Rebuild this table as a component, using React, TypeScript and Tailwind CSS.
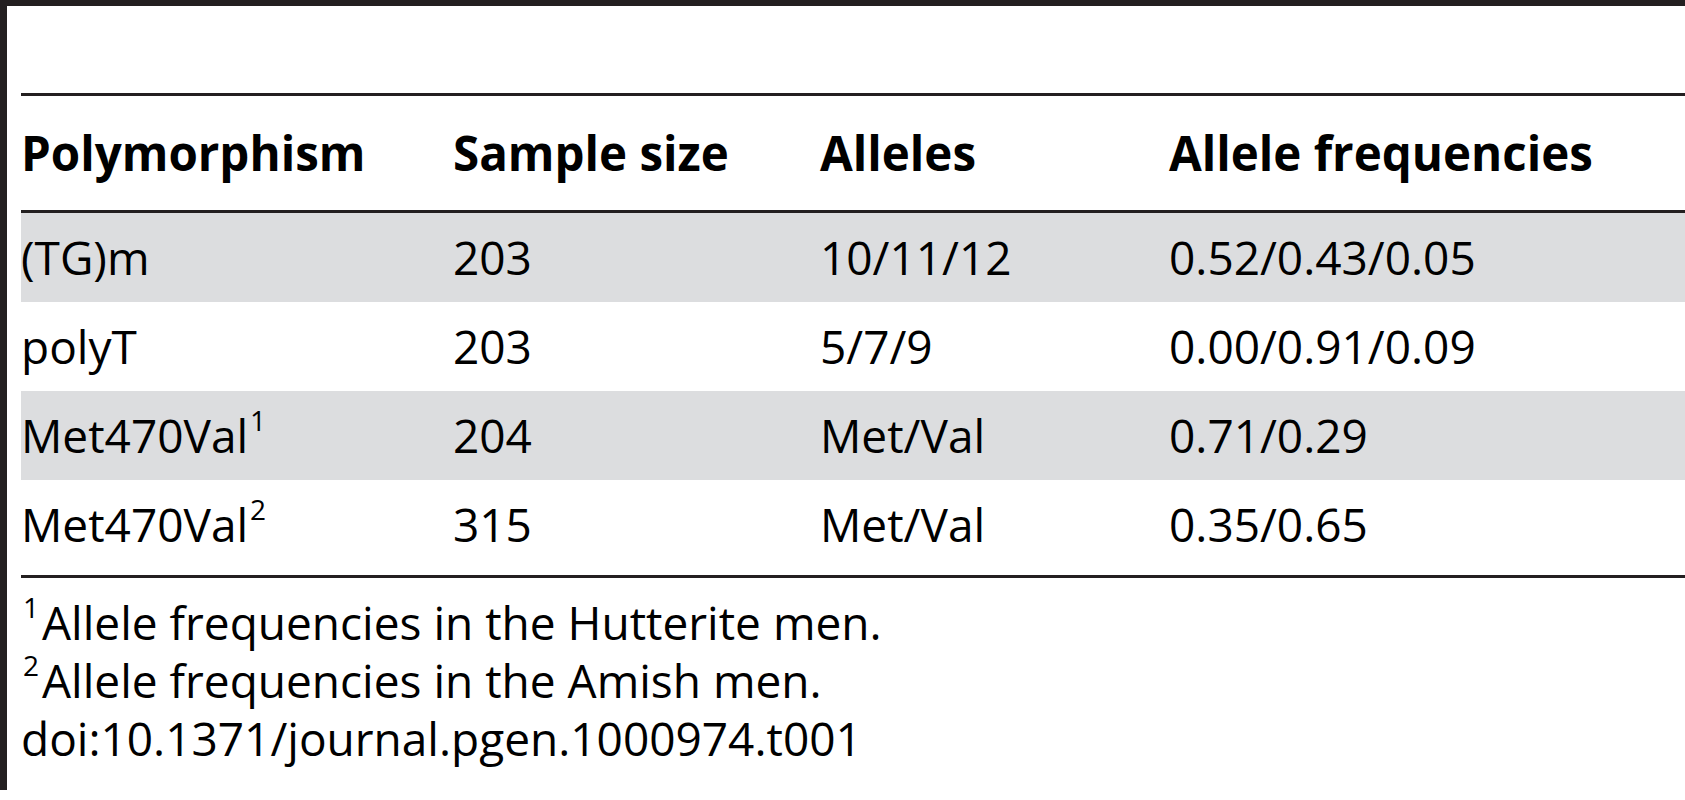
import React from "react";

type Row = {
  name: string;
  note?: string;
  size: string;
  alleles: string;
  freqs: string;
};

const rows: Row[] = [
  { name: "(TG)m", size: "203", alleles: "10/11/12", freqs: "0.52/0.43/0.05" },
  { name: "polyT", size: "203", alleles: "5/7/9", freqs: "0.00/0.91/0.09" },
  { name: "Met470Val", note: "1", size: "204", alleles: "Met/Val", freqs: "0.71/0.29" },
  { name: "Met470Val", note: "2", size: "315", alleles: "Met/Val", freqs: "0.35/0.65" },
];

const cols = "grid grid-cols-[432px_367px_349px_1fr] items-center";

function Sup({ children }: { children: React.ReactNode }) {
  return <sup className="text-[28px] top-[-22px] leading-none ml-[2px] mr-[3px]">{children}</sup>;
}

export default function App() {
  return (
    <div className="w-[1685px] h-[800px] bg-white text-black font-['Open_Sans',sans-serif]">
      <div className="h-[790px] border-l-[7px] border-t-[6px] border-[#231f20] pl-[14px]">
        <div className="h-[87px]" />
        <div className="border-t-[3px] border-b-[3px] border-[#231f20]">
          <div className={`${cols} h-[117px] text-[47.5px] font-bold border-b-[3px] border-[#231f20]`}>
            <div>Polymorphism</div>
            <div>Sample size</div>
            <div>Alleles</div>
            <div>Allele frequencies</div>
          </div>
          <div className="pb-[6px]">
            {rows.map((r, i) => (
              <div
                key={i}
                className={`${cols} h-[89px] text-[46px] ${i % 2 === 0 ? "bg-[#dcdddf]" : "bg-white"}`}
              >
                <div className="whitespace-nowrap">
                  {r.name}
                  {r.note && <Sup>{r.note}</Sup>}
                </div>
                <div>{r.size}</div>
                <div>{r.alleles}</div>
                <div>{r.freqs}</div>
              </div>
            ))}
          </div>
        </div>
        <div className="mt-[15px] text-[46px] leading-[58px]">
          <div className="flex items-baseline">
            <Sup>1</Sup>
            <span>Allele frequencies in the Hutterite men.</span>
          </div>
          <div className="flex items-baseline">
            <Sup>2</Sup>
            <span>Allele frequencies in the Amish men.</span>
          </div>
          <div>doi:10.1371/journal.pgen.1000974.t001</div>
        </div>
      </div>
    </div>
  );
}
